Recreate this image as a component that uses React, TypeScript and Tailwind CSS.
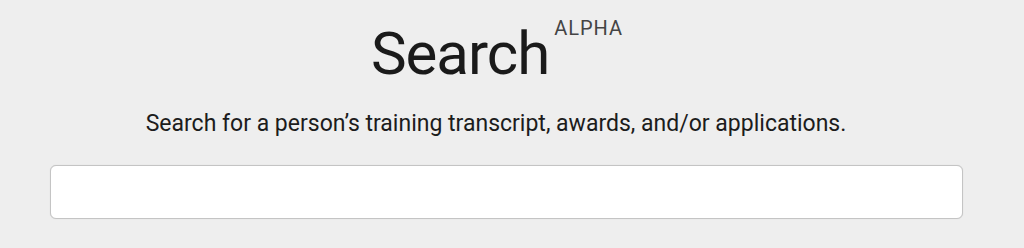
export default function App() {
  return (
    <div className="h-[248px] w-full overflow-hidden bg-[#eeeeee] font-['Roboto',sans-serif] text-[#1f1f1f]">
      <div className="flex flex-col items-center">
        <div className="mt-[24px] mr-[30px] flex items-start">
          <h1 className="text-[60px] leading-[60px] font-normal tracking-[-1px] text-[#1a1a1a]">Search</h1>
          <span className="ml-[5px] mt-[-8px] text-[20px] leading-[24px] tracking-[1px] text-[#444444]">ALPHA</span>
        </div>
        <p className="mt-[26px] mr-[32px] text-[23px] leading-[28px] text-[#1c1c1c]">
          Search for a person’s training transcript, awards, and/or applications.
        </p>
      </div>
      <div className="mt-[27px] pl-[50px] pr-[61px]">
        <input
          type="text"
          className="block h-[54px] w-full rounded-[6px] border border-[#c4c4c4] bg-white px-3 text-[18px] outline-none shadow-[0_0_1px_rgba(0,0,0,0.15)]"
        />
      </div>
    </div>
  );
}
